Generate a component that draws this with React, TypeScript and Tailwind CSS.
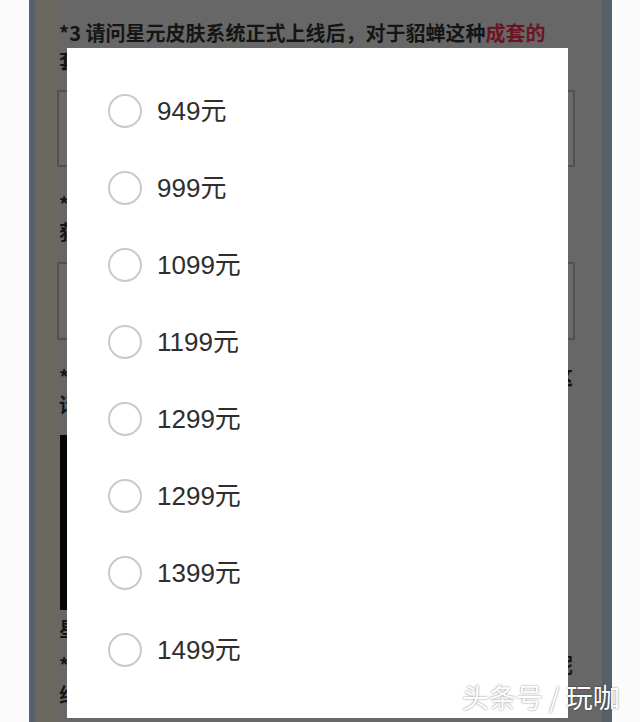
import React from "react";

const PRICES = ["949元", "999元", "1099元", "1199元", "1299元", "1299元", "1399元", "1499元"];

function Radio({ label }: { label: string }) {
  return (
    <div className="flex items-center h-[77px] pl-[41px]">
      <span className="w-[34px] h-[34px] shrink-0 rounded-full border-2 border-[#cacaca] bg-white" />
      <span className="ml-[15px] text-[26px] leading-none text-[#2e2e2e] font-['Liberation_Sans','Noto_Sans_CJK_SC',sans-serif]">
        {label}
      </span>
    </div>
  );
}

// a question line of the page behind the dialog: only its two ends peek out
function BackLine({ left, right, className = "" }: { left: string; right?: string; className?: string }) {
  return (
    <div className={`flex justify-between w-[516px] pl-[2px] h-[22px] leading-[22px] text-[20px] font-bold text-[#151515] whitespace-nowrap ${className}`}>
      <span>{left}</span>
      {right && <span>{right}</span>}
    </div>
  );
}

export default function App() {
  return (
    <div className="relative w-[640px] h-[722px] flex overflow-hidden bg-[#fbfbfb] font-['Noto_Sans_CJK_SC',sans-serif]">
      <div className="w-[29px] shrink-0" />

      {/* page under the dimmed overlay */}
      <div className="relative w-[583px] h-full shrink-0 overflow-hidden border-l-[6px] border-l-[#56616d] border-r-[10px] border-r-[#57616b] bg-[linear-gradient(to_right,#6b695f_0,#6b695f_22px,#676767_22px)]">
        <div className="pl-[22px] pt-[22px] w-[540px]">
          <div className="pl-[2px] h-[22px] leading-[22px] text-[20px] font-bold text-[#151515] whitespace-nowrap">
            *3 请问星元皮肤系统正式上线后，对于貂蝉这种<span className="text-[#6c1424]">成套的</span>
          </div>
          <BackLine left="套" className="mt-[6px]" />
          <div className="mt-[18px] h-[77px] border-[2px] border-[#515151] bg-[#6a6a6a]" />

          <BackLine left="*" className="mt-[26px]" />
          <BackLine left="获" className="mt-[6px]" />
          <div className="mt-[19px] h-[78px] border-[2px] border-[#515151] bg-[#6a6a6a]" />

          <BackLine left="*" right="这" className="mt-[26px]" />
          <BackLine left="请" className="mt-[6px]" />
          <div className="ml-[3px] mt-[19px] h-[175px] w-[500px] bg-[#050505]" />

          <BackLine left="星" className="mt-[8px] text-[#1c1c1c]" />
          <BackLine left="*" right="呢" className="mt-[14px]" />
          <BackLine left="组" className="mt-[8px]" />
        </div>

        {/* modal dialog */}
        <div className="absolute left-[32px] top-[48px] w-[501px] h-[670px] bg-white pt-[24px]">
          {PRICES.map((p, i) => (
            <Radio key={i} label={p} />
          ))}
        </div>
      </div>

      <div className="w-[28px] shrink-0" />

      {/* watermark */}
      <div className="absolute left-[462px] top-[683px] text-[27px] leading-none text-white whitespace-nowrap [text-shadow:0_0_2px_rgba(0,0,0,0.55)]">
        头条号 / 玩咖
      </div>
    </div>
  );
}
